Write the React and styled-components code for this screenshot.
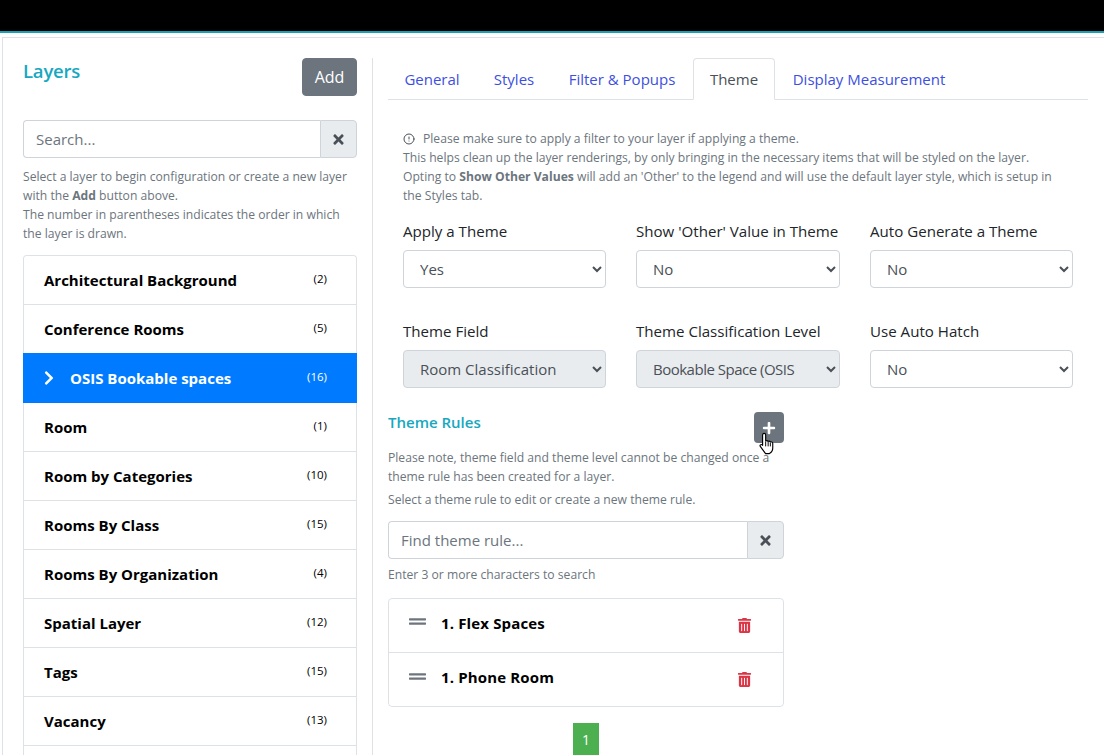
import React from "react";
import styled, { createGlobalStyle } from "styled-components";
import { FaTimes, FaChevronRight, FaTrashAlt, FaGripLines, FaPlus } from "react-icons/fa";
import { CircleAlert } from "lucide-react";

const Global = createGlobalStyle`
  html, body { margin: 0; padding: 0; height: 755px; overflow: hidden; background: #fff; }
  body { font-family: "Open Sans", "Noto Sans", "Liberation Sans", sans-serif; font-size: 15px; color: #212529; }
  * { box-sizing: border-box; }
`;

const TopBar = styled.div`
  height: 33px;
  background: #000;
  border-bottom: 2px solid #17a2b8;
`;
const Frame = styled.div`
  margin: 4px 0 0 2px;
  height: 718px;
  overflow: hidden;
  border-top: 1px solid #dee2e6;
  border-left: 1px solid #dee2e6;
  padding: 20px 16px 0 20px;
  display: flex;
  align-items: flex-start;
`;
const LeftPanel = styled.aside`
  width: 334px;
  flex: none;
`;
const PanelHead = styled.div`
  display: flex;
  justify-content: space-between;
  align-items: flex-start;
  margin-bottom: 24px;
`;
const Title = styled.h2`
  margin: 1px 0 0;
  font-size: 18.5px;
  line-height: 24px;
  font-weight: 600;
  letter-spacing: -0.2px;
  color: #17a8c0;
`;
const AddButton = styled.button`
  width: 55px;
  height: 38px;
  padding: 0;
  border: 1px solid #6c757d;
  border-radius: 4px;
  background: #6c757d;
  color: #fff;
  font: inherit;
  font-size: 16px;
`;
const InputGroup = styled.div`
  display: flex;
  height: 38px;
  width: 100%;
  margin-top: ${(p) => p.$mt || 0}px;
`;
const TextInput = styled.input`
  flex: 1;
  min-width: 0;
  padding: 0 12px;
  border: 1px solid #ced4da;
  border-right: 0;
  border-radius: 4px 0 0 4px;
  font: inherit;
  outline: none;
  &::placeholder { color: #6c757d; opacity: 1; }
`;
const ClearButton = styled.span`
  width: 37px;
  flex: none;
  display: flex;
  align-items: center;
  justify-content: center;
  border: 1px solid #ced4da;
  border-radius: 0 4px 4px 0;
  background: #e9ecef;
  color: #495057;
  font-size: 15px;
`;
const Help = styled.p`
  margin: ${(p) => p.$m || "0"};
  font-size: 12.15px;
  line-height: 19px;
  color: #6c757d;
`;
const LayerList = styled.ul`
  list-style: none;
  margin: 12px 0 0;
  padding: 0;
  border: 1px solid #dee2e6;
  border-bottom: 0;
  border-radius: 4px 4px 0 0;
`;
const LayerRow = styled.li`
  height: ${(p) => (p.$active ? "50px" : "49px")};
  margin: ${(p) => (p.$active ? "-1px -1px 0" : "0")};
  padding: ${(p) => (p.$active ? "0 30px 0 21px" : "0 29px 0 20px")};
  display: flex;
  align-items: center;
  justify-content: space-between;
  border-bottom: ${(p) => (p.$active ? "0" : "1px solid #dee2e6")};
  background: ${(p) => (p.$active ? "#007bff" : "#fff")};
  color: ${(p) => (p.$active ? "#fff" : "#000")};
  &:first-child { border-radius: 4px 4px 0 0; }
`;
const LayerName = styled.span`
  display: flex;
  align-items: center;
  gap: 13px;
  font-size: 15px;
  font-weight: 700;
  svg { font-size: 16px; margin-left: -3px; }
`;
const Order = styled.span`
  font-size: 11.5px;
  margin-top: -4px;
`;
const Divider = styled.div`
  width: 1px;
  height: 700px;
  flex: none;
  margin: 0 15px;
  background: #dee2e6;
`;
const RightPanel = styled.main`
  flex: 1;
  min-width: 0;
`;
const Tabs = styled.nav`
  display: flex;
  height: 42px;
  border-bottom: 1px solid #dee2e6;
`;
const Tab = styled.a`
  height: 42px;
  padding-top: 9px;
  margin-right: ${(p) => (p.$active ? "2px" : "1px")};
  line-height: 22px;
  font-size: 15px;
  text-align: center;
  border: 1px solid ${(p) => (p.$active ? "#dee2e6" : "transparent")};
  border-bottom-color: ${(p) => (p.$active ? "#fff" : "transparent")};
  border-radius: 4px 4px 0 0;
  background: ${(p) => (p.$active ? "#fff" : "transparent")};
  color: ${(p) => (p.$active ? "#495057" : "#3d4fe0")};
  width: ${(p) => p.$w}px;
  flex: none;
  white-space: nowrap;
`;
const Notice = styled.div`
  margin: 29px 0 0 15px;
  width: 660px;
  font-size: 12.15px;
  line-height: 19px;
  color: #6c757d;
  svg { width: 12px; height: 12px; vertical-align: -2px; margin-right: 8px; color: #495057; }
`;
const FieldGrid = styled.div`
  display: grid;
  grid-template-columns: 203px 204px 203px;
  column-gap: 30px;
  row-gap: 32px;
  margin: 15px 0 0 15px;
`;
const Field = styled.label`
  display: flex;
  flex-direction: column;
  gap: 8px;
`;
const FieldLabel = styled.span`
  font-size: 15.1px;
  line-height: 22px;
  color: #212529;
  white-space: nowrap;
`;
const Select = styled.select`
  height: 38px;
  width: 100%;
  padding: 0 26px 0 12px;
  border: 1px solid #ced4da;
  border-radius: 4px;
  background: ${(p) => (p.disabled ? "#e9ecef" : "#fff")};
  color: #495057;
  opacity: 1;
  font: inherit;
  letter-spacing: ${(p) => (p.$tight ? "-0.5px" : "0")};
`;
const Rules = styled.section`
  width: 396px;
  margin-top: 24px;
`;
const RulesHead = styled.div`
  display: flex;
  justify-content: space-between;
  align-items: flex-start;
  height: 36px;
`;
const RulesTitle = styled.h3`
  margin: 0;
  font-size: 15px;
  line-height: 21px;
  font-weight: 600;
  color: #17a8c0;
`;
const IconButton = styled.button`
  position: relative;
  width: 30px;
  height: 31px;
  padding: 0;
  border: 0;
  border-radius: 4px;
  background: #6c757d;
  color: #fff;
  font-size: 14px;
  display: flex;
  align-items: center;
  justify-content: center;
`;
const Cursor = styled.svg`
  position: absolute;
  left: 4px;
  top: 20px;
  width: 18px;
  height: 23px;
`;
const RuleList = styled.ul`
  list-style: none;
  margin: 14px 0 0;
  padding: 0;
  border: 1px solid #dee2e6;
  border-radius: 4px;
`;
const RuleRow = styled.li`
  height: ${(p) => (p.$last ? "53px" : "54px")};
  padding: 0 31px ${(p) => (p.$last ? "5px" : "6px")} 20px;
  display: flex;
  align-items: center;
  border-bottom: ${(p) => (p.$last ? "0" : "1px solid #dee2e6")};
  color: #000;
`;
const Grip = styled.span`
  color: #6c757d;
  font-size: 17px;
  width: 32px;
  display: flex;
  align-items: center;
  margin-top: -2px;
`;
const RuleName = styled.span`
  flex: 1;
  font-size: 15px;
  font-weight: 700;
  letter-spacing: 0.15px;
`;
const Trash = styled.span`
  color: #dc3545;
  font-size: 15px;
  display: flex;
  margin-top: 5px;
`;
const Pager = styled.div`
  display: flex;
  justify-content: center;
  margin-top: 16px;
`;
const PageNum = styled.span`
  width: 26px;
  height: 32px;
  display: flex;
  align-items: center;
  justify-content: center;
  background: #4caf50;
  color: #fff;
  font-size: 14px;
`;

const layers = [
  ["Architectural Background", 2],
  ["Conference Rooms", 5],
  ["OSIS Bookable spaces", 16, true],
  ["Room", 1],
  ["Room by Categories", 10],
  ["Rooms By Class", 15],
  ["Rooms By Organization", 4],
  ["Spatial Layer", 12],
  ["Tags", 15],
  ["Vacancy", 13],
];

const fields = [
  { label: "Apply a Theme", value: "Yes" },
  { label: "Show 'Other' Value in Theme", value: "No" },
  { label: "Auto Generate a Theme", value: "No" },
  { label: "Theme Field", value: "Room Classification", disabled: true },
  { label: "Theme Classification Level", value: "Bookable Space (OSIS", disabled: true, tight: true },
  { label: "Use Auto Hatch", value: "No" },
];

const tabs = [
  ["General", 88],
  ["Styles", 74],
  ["Filter & Popups", 140],
  ["Theme", 82, true],
  ["Display Measurement", 184],
];

export default function App() {
  return (
    <>
      <Global />
      <TopBar />
      <Frame>
        <LeftPanel>
          <PanelHead>
            <Title>Layers</Title>
            <AddButton>Add</AddButton>
          </PanelHead>
          <InputGroup>
            <TextInput placeholder="Search..." />
            <ClearButton><FaTimes /></ClearButton>
          </InputGroup>
          <Help $m="9px 0 0">
            Select a layer to begin configuration or create a new layer with the <b>Add</b> button above.
            <br />
            The number in parentheses indicates the order in which the layer is drawn.
          </Help>
          <LayerList>
            {layers.map(([name, order, active]) => (
              <LayerRow key={name} $active={active}>
                <LayerName>
                  {active && <FaChevronRight />}
                  {name}
                </LayerName>
                <Order>({order})</Order>
              </LayerRow>
            ))}
            <LayerRow />
          </LayerList>
        </LeftPanel>
        <Divider />
        <RightPanel>
          <Tabs>
            {tabs.map(([label, w, active]) => (
              <Tab key={label} $w={w} $active={active}>{label}</Tab>
            ))}
          </Tabs>
          <Notice>
            <CircleAlert />
            Please make sure to apply a filter to your layer if applying a theme.
            <br />
            This helps clean up the layer renderings, by only bringing in the necessary items that will be styled on the layer.
            <br />
            Opting to <b>Show Other Values</b> will add an 'Other' to the legend and will use the default layer style, which is setup in the Styles tab.
          </Notice>
          <FieldGrid>
            {fields.map(({ label, value, disabled, tight }) => (
              <Field key={label}>
                <FieldLabel>{label}</FieldLabel>
                <Select disabled={disabled} $tight={tight} defaultValue={value}>
                  <option>{value}</option>
                </Select>
              </Field>
            ))}
          </FieldGrid>
          <Rules>
            <RulesHead>
              <RulesTitle>Theme Rules</RulesTitle>
              <IconButton>
                <FaPlus />
                <Cursor viewBox="0 0 18 24">
                  <path d="M6 1.5c1 0 1.6.7 1.6 1.7v6.2c.9-.6 2-.5 2.6.3.8-.4 1.8-.2 2.3.6.9-.3 2.3.2 2.5 1.5v5c0 2.600-1.600 4.700-3.500 5.700H7.500L2 15c-.8-1 .5-2.600 1.900-1.600l.5.5V3.200C4.400 2.200 5 1.500 6 1.500z" fill="#fff" stroke="#000" strokeWidth="1.200" strokeLinejoin="round" />
                  <path d="M7.600 10v5M10.200 10v5M12.500 11v4" stroke="#000" strokeWidth="1" fill="none" />
                </Cursor>
              </IconButton>
            </RulesHead>
            <Help>Please note, theme field and theme level cannot be changed once a theme rule has been created for a layer.</Help>
            <Help $m="4px 0 0">Select a theme rule to edit or create a new theme rule.</Help>
            <InputGroup $mt={12}>
              <TextInput placeholder="Find theme rule..." />
              <ClearButton><FaTimes /></ClearButton>
            </InputGroup>
            <Help $m="6px 0 0">Enter 3 or more characters to search</Help>
            <RuleList>
              <RuleRow>
                <Grip><FaGripLines /></Grip>
                <RuleName>1. Flex Spaces</RuleName>
                <Trash><FaTrashAlt /></Trash>
              </RuleRow>
              <RuleRow $last>
                <Grip><FaGripLines /></Grip>
                <RuleName>1. Phone Room</RuleName>
                <Trash><FaTrashAlt /></Trash>
              </RuleRow>
            </RuleList>
            <Pager><PageNum>1</PageNum></Pager>
          </Rules>
        </RightPanel>
      </Frame>
    </>
  );
}
